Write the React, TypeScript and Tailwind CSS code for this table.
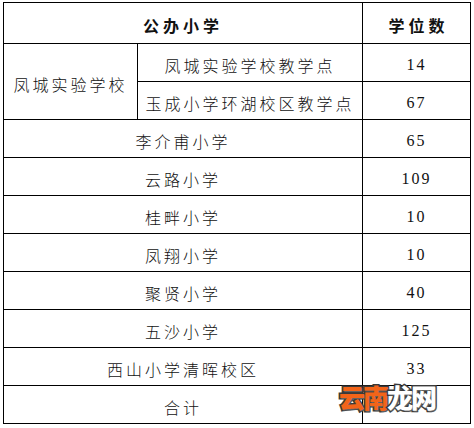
import React from "react";

const cjk = "font-['Noto_Sans_CJK_SC',sans-serif]";
const num = "font-['Liberation_Serif',serif]";

// 学校行（整行合并）
const rows: { name: string; seats: string }[] = [
  { name: "李介甫小学", seats: "65" },
  { name: "云路小学", seats: "109" },
  { name: "桂畔小学", seats: "10" },
  { name: "凤翔小学", seats: "10" },
  { name: "聚贤小学", seats: "40" },
  { name: "五沙小学", seats: "125" },
  { name: "西山小学清晖校区", seats: "33" },
  { name: "合计", seats: "" },
];

const cell = "border border-black text-center align-middle p-0 pt-[4px]";

export default function App() {
  return (
    <div className="relative w-[474px] h-[428px] bg-white pl-[3px] pt-[2px]">
      <table className="border-collapse table-fixed w-[467px] text-[16px] text-[#111]">
        <colgroup>
          <col className="w-[134px]" />
          <col className="w-[225px]" />
          <col className="w-[108px]" />
        </colgroup>
        <tbody>
          {/* ヘッダー */}
          <tr className="h-[41px]">
            <td colSpan={2} className={`${cell} ${cjk} font-bold tracking-[4px] pt-[1px]`}>
              公办小学
            </td>
            <td className={`${cell} ${cjk} font-bold tracking-[4px] pt-[1px] pl-[4px]`}>
              学位数
            </td>
          </tr>

          <tr className="h-[38px]">
            <td rowSpan={2} className={`${cell} ${cjk} tracking-[3px] font-light`}>
              凤城实验学校
            </td>
            <td className={`${cell} ${cjk} tracking-[3px] font-light`}>凤城实验学校教学点</td>
            <td className={`${cell} ${num} tracking-[2px]`}>14</td>
          </tr>
          <tr className="h-[38px]">
            <td className={`${cell} ${cjk} tracking-[3px] font-light`}>玉成小学环湖校区教学点</td>
            <td className={`${cell} ${num} tracking-[2px]`}>67</td>
          </tr>

          {rows.map((r) => (
            <tr key={r.name} className="h-[38px]">
              <td colSpan={2} className={`${cell} ${cjk} tracking-[3px] font-light`}>
                {r.name}
              </td>
              <td className={`${cell} ${num} tracking-[2px]`}>{r.seats}</td>
            </tr>
          ))}
        </tbody>
      </table>

      {/* 透かし */}
      <div
        className={`absolute left-[339px] top-[384px] flex text-[26px] font-black leading-none tracking-[-2px] ${cjk} [-webkit-text-stroke:3px_#3a3a3a] [paint-order:stroke_fill] [text-shadow:1px_1px_1px_#666]`}
      >
        <span className="text-[#f26419]">云南</span>
        <span className="text-white">龙网</span>
      </div>
    </div>
  );
}
